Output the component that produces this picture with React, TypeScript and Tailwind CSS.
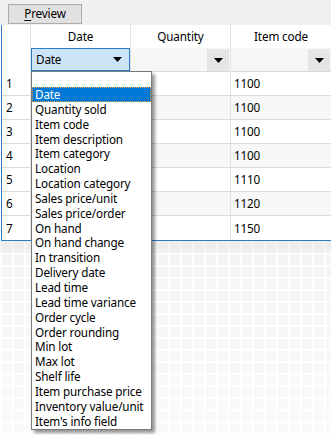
import React from "react";

const items = [
  "Date",
  "Quantity sold",
  "Item code",
  "Item description",
  "Item category",
  "Location",
  "Location category",
  "Sales price/unit",
  "Sales price/order",
  "On hand",
  "On hand change",
  "In transition",
  "Delivery date",
  "Lead time",
  "Lead time variance",
  "Order cycle",
  "Order rounding",
  "Min lot",
  "Max lot",
  "Shelf life",
  "Item purchase price",
  "Inventory value/unit",
  "Item's info field",
];

const codes = ["1100", "1100", "1100", "1100", "1110", "1120", "1150"];

function Arrow() {
  return (
    <svg width="9" height="5" viewBox="0 0 9 5">
      <path d="M0 0H9L4.5 5Z" fill="#000" />
    </svg>
  );
}

export default function App() {
  return (
    <div
      className="relative w-[331px] h-[435px] overflow-hidden text-[11.7px] tracking-[-0.15px] text-black"
      style={{ fontFamily: '"Noto Sans", sans-serif' }}
    >
      {/* toolbar */}
      <div className="h-[25px] bg-[#f0f0f0] pl-[8px] pt-[4px]">
        <div className="w-[74px] h-[20px] border border-[#adadad] bg-[#e1e1e1] flex items-center justify-center leading-none">
          <span>
            <span className="underline underline-offset-2">P</span>review
          </span>
        </div>
      </div>

      {/* grid */}
      <div className="ml-[1px] border-l border-b border-[#2b7bc4] bg-white">
        {/* header */}
        <div className="grid grid-cols-[29px_100px_100px_1fr] h-[23px]">
          <div className="border-r border-[#e3e3e3]" />
          <div className="border-r border-[#e3e3e3] flex items-center justify-center pt-[1px]">Date</div>
          <div className="border-r border-[#e3e3e3] flex items-center justify-center pt-[1px]">Quantity</div>
          <div className="flex items-center justify-center pt-[1px]">Item code</div>
        </div>
        {/* filter row */}
        <div className="grid grid-cols-[29px_100px_100px_1fr] h-[24px] border-b border-[#dadada] bg-[#f6f6f6]">
          <div className="border-r border-[#e3e3e3] bg-white" />
          <div className="border-r border-[#e3e3e3] pb-[1px]">
            <div className="h-[23px] border border-[#2a7bc8] bg-[#cce4f7] flex items-center justify-between pl-[4px] pr-[7px]">
              <span>Date</span>
              <Arrow />
            </div>
          </div>
          <div className="border-r border-[#e3e3e3] flex justify-end pt-[1px] pr-[1px]">
            <div className="w-[22px] h-[22px] bg-[#e5e5e5] flex items-center justify-center">
              <Arrow />
            </div>
          </div>
          <div className="flex justify-end pt-[1px] pr-[1px]">
            <div className="w-[22px] h-[22px] bg-[#e5e5e5] flex items-center justify-center">
              <Arrow />
            </div>
          </div>
        </div>
        {/* rows */}
        {codes.map((c, i) => (
          <div
            key={i}
            className={`grid grid-cols-[29px_100px_100px_1fr] h-[24px] ${i < 6 ? "border-b border-[#dadada]" : ""} ${i % 2 === 1 ? "bg-[#f7f7f7]" : "bg-white"}`}
          >
            <div className="border-r border-[#e3e3e3] bg-white flex items-center pl-[4px] pt-[1px]">{i + 1}</div>
            <div className="border-r border-[#e3e3e3]" />
            <div className="border-r border-[#e3e3e3]" />
            <div className="flex items-center pl-[3px] pt-[1px]">{c}</div>
          </div>
        ))}
      </div>

      {/* tiled background */}
      <div
        className="h-[200px] bg-[#eeeeee] [background-image:linear-gradient(to_bottom,rgba(232,232,232,0.7),rgba(255,255,255,0.4)_8%,rgba(255,255,255,0.75)),linear-gradient(#fff_2px,transparent_2px),linear-gradient(90deg,#fff_2px,transparent_2px)] [background-size:100%_100%,12px_12px,12px_12px]"
      />

      {/* dropdown list */}
      <div className="absolute left-[31px] top-[71px] w-[121px] border border-[#7a7a7a] bg-white shadow-[3px_3px_3px_rgba(0,0,0,0.4)]">
        <div className="h-[15px]" />
        {items.map((t, i) => (
          <div
            key={t}
            className={`h-[14.85px] leading-[14.85px] pl-[3px] whitespace-nowrap ${i === 0 ? "bg-[#0078d7] text-white outline outline-1 outline-dotted outline-[#f0a040] -outline-offset-1" : ""}`}
          >
            {t}
          </div>
        ))}
        <div className="h-[1px]" />
      </div>
    </div>
  );
}
